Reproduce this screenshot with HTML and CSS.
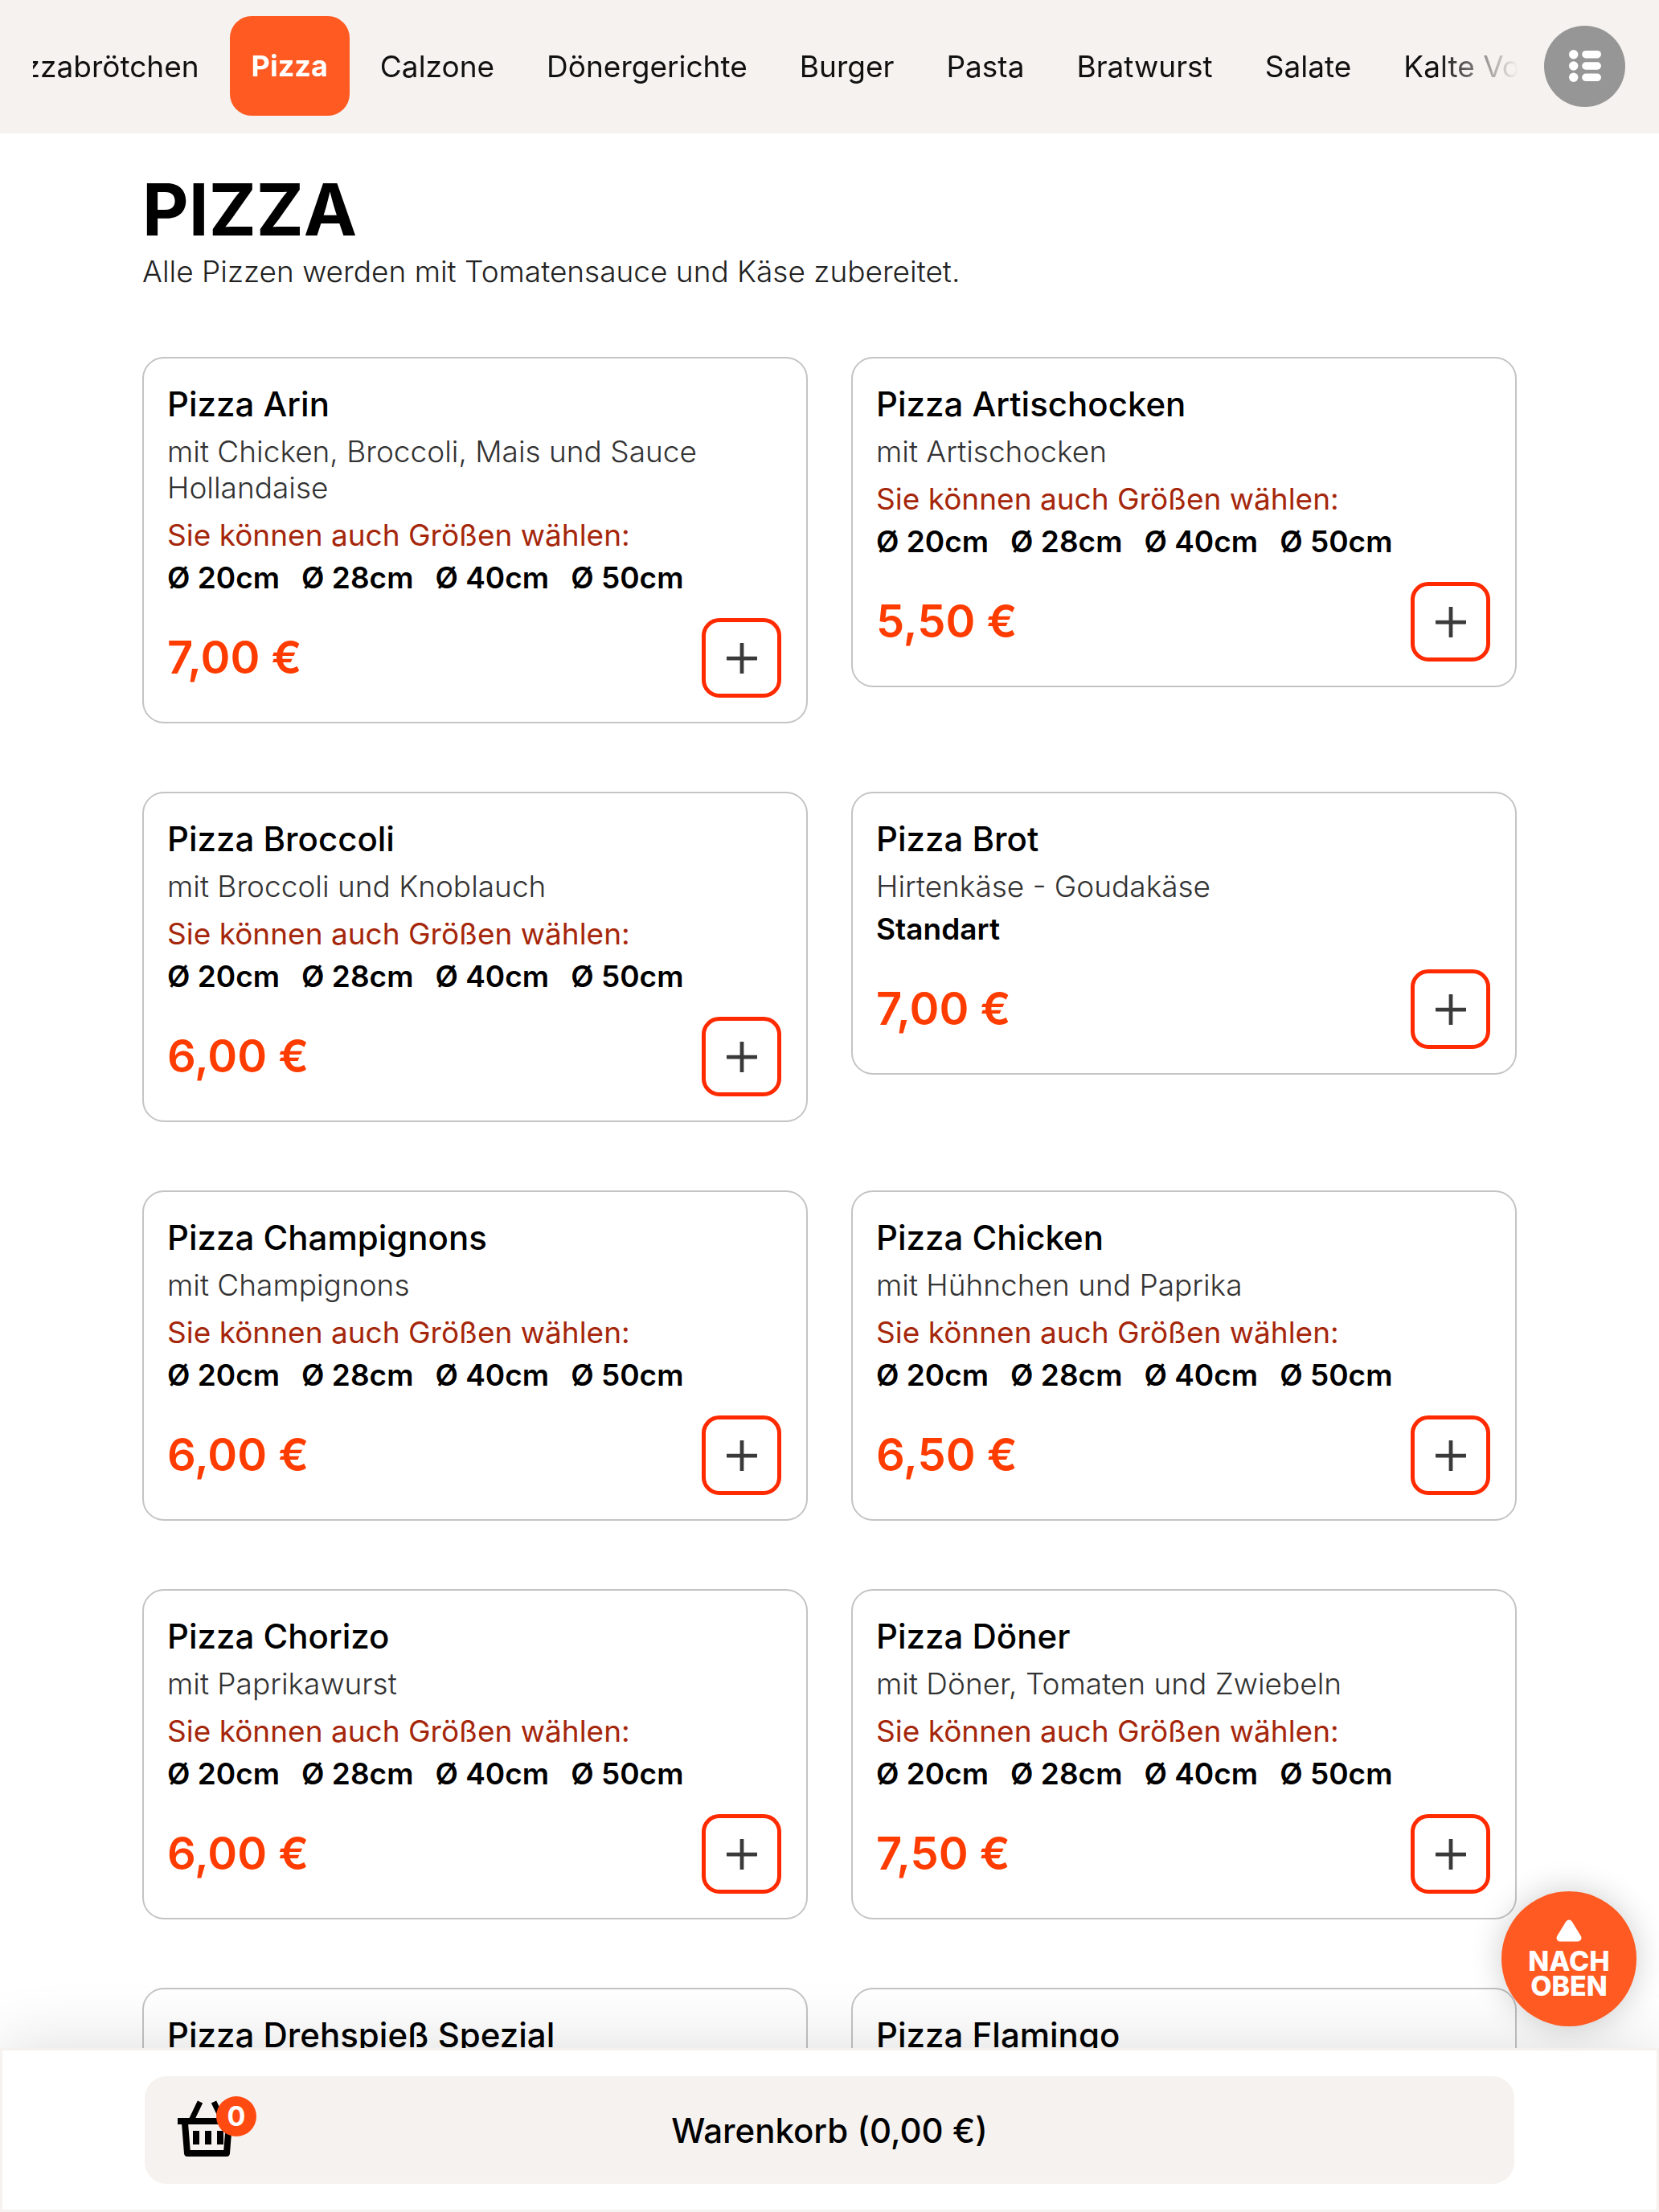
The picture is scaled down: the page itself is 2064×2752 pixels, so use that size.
FILE: index.html
```html
<!DOCTYPE html>
<html lang="de">
<head>
<meta charset="utf-8">
<meta name="viewport" content="width=device-width, initial-scale=1">
<title>Pizza – Speisekarte</title>
<link rel="stylesheet" href="styles.css">
</head>
<body>
<header class="topbar">
  <nav class="categories" aria-label="Kategorien">
    <a class="category" href="#pizzabroetchen">Pizzabrötchen</a>
    <a class="category category-active" href="#pizza" aria-current="true">Pizza</a>
    <a class="category" href="#calzone">Calzone</a>
    <a class="category" href="#doener">Dönergerichte</a>
    <a class="category" href="#burger">Burger</a>
    <a class="category" href="#pasta">Pasta</a>
    <a class="category" href="#bratwurst">Bratwurst</a>
    <a class="category" href="#salate">Salate</a>
    <a class="category" href="#vorspeisen">Kalte Vorspeisen</a>
  </nav>
  <button class="list-button" type="button" aria-label="Alle Kategorien">
    <svg class="list-icon" viewBox="0 0 42 42" aria-hidden="true">
      <circle cx="6" cy="6" r="6"/><circle cx="6" cy="21" r="6"/><circle cx="6" cy="36" r="6"/>
      <rect x="17" y="1" width="25" height="10" rx="5"/><rect x="17" y="16" width="25" height="10" rx="5"/><rect x="17" y="31" width="25" height="10" rx="5"/>
    </svg>
  </button>
</header>

<main class="menu">
  <h1 class="menu-title">PIZZA</h1>
  <p class="menu-note">Alle Pizzen werden mit Tomatensauce und Käse zubereitet.</p>
  <div class="dishes">
    <article class="dish">
      <h2 class="dish-name">Pizza Arin</h2>
      <p class="dish-text">mit Chicken, Broccoli, Mais und Sauce Hollandaise</p>
      <p class="dish-hint">Sie können auch Größen wählen:</p>
      <ul class="sizes"><li>Ø 20cm</li><li>Ø 28cm</li><li>Ø 40cm</li><li>Ø 50cm</li></ul>
      <div class="dish-foot"><span class="price">7,00 €</span><button class="add" type="button" aria-label="Pizza Arin hinzufügen"><svg class="plus" viewBox="0 0 40 40"><path d="M20 1v38M1 20h38"/></svg></button></div>
    </article>
    <article class="dish">
      <h2 class="dish-name">Pizza Artischocken</h2>
      <p class="dish-text">mit Artischocken</p>
      <p class="dish-hint">Sie können auch Größen wählen:</p>
      <ul class="sizes"><li>Ø 20cm</li><li>Ø 28cm</li><li>Ø 40cm</li><li>Ø 50cm</li></ul>
      <div class="dish-foot"><span class="price">5,50 €</span><button class="add" type="button" aria-label="Pizza Artischocken hinzufügen"><svg class="plus" viewBox="0 0 40 40"><path d="M20 1v38M1 20h38"/></svg></button></div>
    </article>
    <article class="dish">
      <h2 class="dish-name">Pizza Broccoli</h2>
      <p class="dish-text">mit Broccoli und Knoblauch</p>
      <p class="dish-hint">Sie können auch Größen wählen:</p>
      <ul class="sizes"><li>Ø 20cm</li><li>Ø 28cm</li><li>Ø 40cm</li><li>Ø 50cm</li></ul>
      <div class="dish-foot"><span class="price">6,00 €</span><button class="add" type="button" aria-label="Pizza Broccoli hinzufügen"><svg class="plus" viewBox="0 0 40 40"><path d="M20 1v38M1 20h38"/></svg></button></div>
    </article>
    <article class="dish">
      <h2 class="dish-name">Pizza Brot</h2>
      <p class="dish-text">Hirtenkäse - Goudakäse</p>
      <ul class="sizes"><li>Standart</li></ul>
      <div class="dish-foot"><span class="price">7,00 €</span><button class="add" type="button" aria-label="Pizza Brot hinzufügen"><svg class="plus" viewBox="0 0 40 40"><path d="M20 1v38M1 20h38"/></svg></button></div>
    </article>
    <article class="dish">
      <h2 class="dish-name">Pizza Champignons</h2>
      <p class="dish-text">mit Champignons</p>
      <p class="dish-hint">Sie können auch Größen wählen:</p>
      <ul class="sizes"><li>Ø 20cm</li><li>Ø 28cm</li><li>Ø 40cm</li><li>Ø 50cm</li></ul>
      <div class="dish-foot"><span class="price">6,00 €</span><button class="add" type="button" aria-label="Pizza Champignons hinzufügen"><svg class="plus" viewBox="0 0 40 40"><path d="M20 1v38M1 20h38"/></svg></button></div>
    </article>
    <article class="dish">
      <h2 class="dish-name">Pizza Chicken</h2>
      <p class="dish-text">mit Hühnchen und Paprika</p>
      <p class="dish-hint">Sie können auch Größen wählen:</p>
      <ul class="sizes"><li>Ø 20cm</li><li>Ø 28cm</li><li>Ø 40cm</li><li>Ø 50cm</li></ul>
      <div class="dish-foot"><span class="price">6,50 €</span><button class="add" type="button" aria-label="Pizza Chicken hinzufügen"><svg class="plus" viewBox="0 0 40 40"><path d="M20 1v38M1 20h38"/></svg></button></div>
    </article>
    <article class="dish">
      <h2 class="dish-name">Pizza Chorizo</h2>
      <p class="dish-text">mit Paprikawurst</p>
      <p class="dish-hint">Sie können auch Größen wählen:</p>
      <ul class="sizes"><li>Ø 20cm</li><li>Ø 28cm</li><li>Ø 40cm</li><li>Ø 50cm</li></ul>
      <div class="dish-foot"><span class="price">6,00 €</span><button class="add" type="button" aria-label="Pizza Chorizo hinzufügen"><svg class="plus" viewBox="0 0 40 40"><path d="M20 1v38M1 20h38"/></svg></button></div>
    </article>
    <article class="dish">
      <h2 class="dish-name">Pizza Döner</h2>
      <p class="dish-text">mit Döner, Tomaten und Zwiebeln</p>
      <p class="dish-hint">Sie können auch Größen wählen:</p>
      <ul class="sizes"><li>Ø 20cm</li><li>Ø 28cm</li><li>Ø 40cm</li><li>Ø 50cm</li></ul>
      <div class="dish-foot"><span class="price">7,50 €</span><button class="add" type="button" aria-label="Pizza Döner hinzufügen"><svg class="plus" viewBox="0 0 40 40"><path d="M20 1v38M1 20h38"/></svg></button></div>
    </article>
    <article class="dish">
      <h2 class="dish-name">Pizza Drehspieß Spezial</h2>
    </article>
    <article class="dish">
      <h2 class="dish-name">Pizza Flamingo</h2>
    </article>
  </div>
</main>

<footer class="cartbar">
  <button class="to-top" type="button">
    <svg class="to-top-icon" viewBox="0 0 32 28" aria-hidden="true"><path d="M16 5 27 23H5Z"/></svg>
    <span>NACH</span>
    <span>OBEN</span>
  </button>
  <button class="cart" type="button">
    <span class="basket">
      <svg class="basket-icon" viewBox="0 0 72 72" aria-hidden="true">
        <path d="M28 2 17 25M45 2l11 23" stroke-width="7"/>
        <path d="M0 26h72" stroke-width="8"/>
        <path d="M9 28l3 38h49l3-38" stroke-width="8" stroke-linejoin="round"/>
        <path d="M23 38v17M38 38v17M53 38v17" stroke-width="8"/>
      </svg>
      <span class="badge">0</span>
    </span>
    <span>Warenkorb (0,00 €)</span>
  </button>
</footer>
<script src="menu.js"></script>
</body>
</html>
```
FILE: styles.css
```css
* {
  box-sizing: border-box;
  margin: 0;
  padding: 0;
}

:root {
  --orange: #ff5a22;
  --sand: #f6f2ef;
  --side: 177px;
}

body {
  display: flex;
  flex-direction: column;
  height: 100vh;
  overflow: hidden;
  background: #fff;
  color: #000;
  font: 400 37px/45px Inter, "Liberation Sans", sans-serif;
}

button {
  border: 0;
  font: inherit;
  color: inherit;
  cursor: pointer;
}

/* Category bar */
.topbar {
  display: flex;
  flex: none;
  align-items: center;
  gap: 32px;
  padding: 20px 42px 22px 41px;
  background: var(--sand);
}

.categories {
  position: relative;
  display: flex;
  flex: 1;
  gap: 11px;
  min-width: 0;
  overflow-x: auto;
  scrollbar-width: none;
  -webkit-mask-image: linear-gradient(to left, transparent, #000 100px);
  mask-image: linear-gradient(to left, transparent, #000 100px);
}

.category {
  flex: none;
  padding: 40px 27px 39px;
  border-radius: 27px;
  color: #111;
  text-decoration: none;
}

.category-active {
  background: var(--orange);
  color: #fff;
  font-size: 36px;
  font-weight: 700;
}

.list-button {
  display: grid;
  flex: none;
  place-items: center;
  width: 101px;
  height: 101px;
  border-radius: 50%;
  background: #969696;
}

.list-icon {
  width: 40px;
  height: 40px;
  fill: #fff;
}

/* Menu */
.menu {
  flex: 1;
  min-height: 0;
  overflow-y: auto;
  scrollbar-width: none;
  padding: 40px var(--side);
}

.menu-title {
  font-size: 89px;
  font-weight: 700;
  line-height: 109px;
}

.menu-note {
  color: #222;
  font-weight: 300;
}

.dishes {
  display: grid;
  grid-template-columns: 1fr 1fr;
  align-items: start;
  gap: 85px 54px;
  margin-top: 84px;
}

.dish {
  padding: 30px 31px 30px 29px;
  border: 2px solid #c4c4c4;
  border-radius: 27px;
}

.dish-name {
  font-size: 42px;
  font-weight: 500;
  line-height: 54px;
}

.dish-text {
  margin-top: 9px;
  color: #333;
  font-weight: 300;
}

.dish-hint {
  margin-top: 14px;
  color: #a5260a;
}

.sizes {
  display: flex;
  gap: 27px;
  margin-top: 8px;
  list-style: none;
  font-weight: 600;
}

.dish-foot {
  display: flex;
  align-items: center;
  justify-content: space-between;
  margin-top: 28px;
}

.price {
  color: #ff3c00;
  font-size: 56px;
  font-weight: 600;
}

.add {
  display: grid;
  place-items: center;
  width: 99px;
  height: 99px;
  border: 5px solid #ff2a00;
  border-radius: 22px;
  background: #fff;
}

.plus {
  width: 38px;
  height: 38px;
  fill: none;
  stroke: #3a3a3a;
  stroke-width: 5;
  stroke-linecap: round;
}

/* Cart bar */
.cartbar {
  position: relative;
  flex: none;
  padding: 32px var(--side);
  border: 3px solid var(--sand);
  background: #fff;
  box-shadow: 0 0 86px rgba(0, 0, 0, 0.14);
}

.cart {
  display: flex;
  position: relative;
  align-items: center;
  justify-content: center;
  width: 100%;
  height: 134px;
  border-radius: 27px;
  background: var(--sand);
  font-size: 42px;
  font-weight: 500;
}

.basket {
  position: absolute;
  left: 41px;
  top: 30px;
}

.basket-icon {
  display: block;
  width: 72px;
  height: 72px;
  fill: none;
  stroke: #000;
}

.badge {
  position: absolute;
  left: 48px;
  top: -5px;
  width: 50px;
  height: 50px;
  border-radius: 50%;
  background: #ff4a12;
  color: #fff;
  font-size: 34px;
  font-weight: 700;
  line-height: 50px;
  text-align: center;
}

.to-top {
  position: absolute;
  right: 25px;
  bottom: 228px;
  display: flex;
  flex-direction: column;
  align-items: center;
  justify-content: center;
  width: 168px;
  height: 168px;
  border-radius: 50%;
  background: var(--orange);
  box-shadow: 0 0 40px rgba(0, 0, 0, 0.2);
  color: #fff;
  font-size: 34px;
  font-weight: 800;
  line-height: 31px;
}

.to-top-icon {
  width: 32px;
  height: 28px;
  margin-bottom: 8px;
  fill: #fff;
  stroke: #fff;
  stroke-width: 9;
  stroke-linejoin: round;
}
```
FILE: menu.js
```js
// Keep the active category near the left edge, with the previous one peeking in.
const list = document.querySelector(".categories");
const active = list.querySelector(".category-active");
list.scrollLeft = active.offsetLeft - 245;
```
